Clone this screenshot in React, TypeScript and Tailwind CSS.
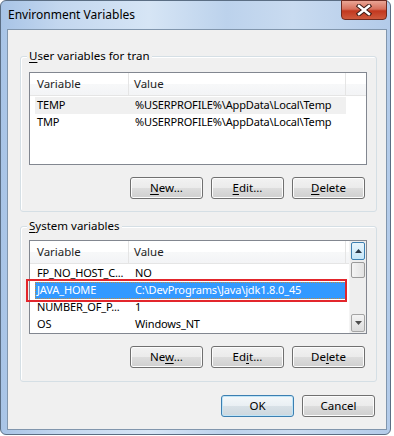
import React from 'react';

const userVars = [
  { name: 'TEMP', value: '%USERPROFILE%\\AppData\\Local\\Temp', state: 'inactive' },
  { name: 'TMP', value: '%USERPROFILE%\\AppData\\Local\\Temp', state: '' },
];

const systemVars = [
  { name: 'FP_NO_HOST_C...', value: 'NO', state: '' },
  { name: 'JAVA_HOME', value: 'C:\\DevPrograms\\Java\\jdk1.8.0_45', state: 'active' },
  { name: 'NUMBER_OF_P...', value: '1', state: '' },
  { name: 'OS', value: 'Windows_NT', state: '' },
];

type Row = { name: string; value: string; state: string };

const WinButton = ({ label, u, primary }: { label: string; u?: number; primary?: boolean }) => (
  <button
    className={
      'w-[73px] h-[22px] rounded-[3px] border text-[11.5px] leading-none text-black ' +
      (primary
        ? 'border-[#3c7fb1] shadow-[inset_0_0_0_1px_#bfe4f7] bg-[linear-gradient(#f4f8fa_0%,#e9eff3_50%,#d8e1e7_50%,#cdd7de_100%)]'
        : 'border-[#707070] shadow-[inset_0_0_0_1px_#fcfcfc] bg-[linear-gradient(#f2f2f2_0%,#ebebeb_50%,#dddddd_50%,#cfcfcf_100%)]')
    }
  >
    {u === undefined ? (
      label
    ) : (
      <>
        {label.slice(0, u)}
        <span className="underline underline-offset-2">{label[u]}</span>
        {label.slice(u + 1)}
      </>
    )}
  </button>
);

const ListHeader = () => (
  <div className="flex h-[23px] border-b border-[#e5e5e5] bg-[linear-gradient(#ffffff_0%,#ffffff_50%,#f7f8f9_51%,#f3f4f6_100%)] text-[11.5px] text-[#1e1e1e]">
    <div className="w-[99px] shrink-0 pl-[7px] flex items-center border-r border-[#e5e5e5]">Variable</div>
    <div className="w-[217px] shrink-0 pl-[5px] flex items-center border-r border-[#e5e5e5]">Value</div>
    <div className="flex-1" />
  </div>
);

const ListRows = ({ rows }: { rows: Row[] }) => (
  <div className="pt-[1px]">
    {rows.map((r) => (
      <div key={r.name} className="relative">
        <div
          className={
            'ml-[5px] w-[311px] h-[17px] flex items-center text-[11px] tracking-[-0.15px] ' +
            (r.state === 'active'
              ? 'bg-[#3399ff] text-white outline-1 outline-dotted outline-[#c88a3a] -outline-offset-1'
              : r.state === 'inactive'
              ? 'bg-[#f0f0f0] text-black'
              : 'text-black')
          }
        >
          <div className="w-[98px] shrink-0 pl-[2px] whitespace-nowrap">{r.name}</div>
          <div className="pl-[2px] whitespace-nowrap">{r.value}</div>
        </div>
        {r.state === 'active' && (
          // red annotation box drawn over the selected row
          <div className="absolute -left-[4px] -top-[3px] w-[321px] h-[23px] border-2 border-[#e3262c]" />
        )}
      </div>
    ))}
  </div>
);

const Arrow = ({ up }: { up?: boolean }) => (
  <svg width="7" height="4" viewBox="0 0 7 4">
    {up ? <path d="M0 4 L3.5 0 L7 4 Z" fill="#2b3a4a" /> : <path d="M0 0 L7 0 L3.5 4 Z" fill="#4d4d4d" />}
  </svg>
);

const ScrollBar = () => (
  <div className="w-[17px] h-full flex flex-col bg-[#eeeeee] border-l border-[#f4f4f4]">
    <div className="h-[18px] mx-[1px] mt-[1px] rounded-[2px] border border-[#3c7fb1] bg-[linear-gradient(#e8f5fc,#c6e6f8)] flex items-center justify-center">
      <Arrow up />
    </div>
    <div className="h-[16px] mx-[1px] mt-[2px] rounded-[2px] border border-[#9a9a9a] bg-[linear-gradient(to_right,#f4f4f4,#e2e2e2)]" />
    <div className="flex-1" />
    <div className="h-[18px] mx-[1px] mb-[1px] rounded-[2px] border border-[#a4a4a4] bg-[linear-gradient(#f4f4f4,#dcdcdc)] flex items-center justify-center">
      <Arrow />
    </div>
  </div>
);

const GroupBox = ({ title, children }: { title: string; children: React.ReactNode }) => (
  <div className="relative border border-[#d5dfe5] rounded-[3px] shadow-[inset_1px_1px_0_#ffffff]">
    <span className="absolute -top-[9px] left-[6px] bg-[#f0f0f0] px-[2px] text-[11.5px] leading-[16px] text-black">
      <span className="underline underline-offset-2">{title[0]}</span>
      {title.slice(1)}
    </span>
    {children}
  </div>
);

export default function App() {
  return (
    <div className="w-[394px] h-[436px] bg-white font-['Segoe_UI','Noto_Sans',sans-serif]">
      <div className="w-[391px] h-[435px] rounded-[6px] border border-[#5b6e84] bg-[linear-gradient(to_right,#a8c4e6_0%,#c3d7ef_15%,#d6e5f5_38%,#bcd2ec_58%,#c9dbf0_75%,#b3cbe9_100%)] flex flex-col">
        {/* title bar */}
        <div className="h-[28px] flex items-start">
          <div className="pl-[7px] pt-[6px] text-[12px] text-black leading-[16px]">Environment Variables</div>
          <div className="flex-1" />
          <div className="mr-[3px] -mt-px w-[46px] h-[20px] rounded-b-[4px] border border-[#6e2a20] bg-[linear-gradient(#e9a595_0%,#d7705c_45%,#c2381f_55%,#cf5a3d_100%)] flex items-center justify-center">
            <svg width="16" height="12" viewBox="0 0 16 12">
              <path d="M3 2 L13 10 M13 2 L3 10" stroke="#3b1a14" strokeWidth="4.5" strokeLinecap="square" />
              <path d="M3 2 L13 10 M13 2 L3 10" stroke="#ffffff" strokeWidth="2.5" strokeLinecap="square" />
            </svg>
          </div>
        </div>

        {/* client area */}
        <div className="mx-[6px] w-[380px] h-[401px] border border-[#8196ad] bg-[#f0f0f0] pl-[12px] pr-[9px] pt-[26px] flex flex-col">
          <GroupBox title="User variables for tran">
            <div className="pl-[8px] pr-[9px] pt-[15px] pb-[12px]">
              <div className="h-[93px] border border-[#828790] bg-white">
                <ListHeader />
                <ListRows rows={userVars} />
              </div>
              <div className="mt-[12px] flex justify-end gap-[8px] pr-[2px]">
                <WinButton label="New..." u={0} />
                <WinButton label="Edit..." u={0} />
                <WinButton label="Delete" u={0} />
              </div>
            </div>
          </GroupBox>

          <div className="mt-[14px]">
            <GroupBox title="System variables">
              <div className="pl-[8px] pr-[9px] pt-[13px] pb-[13px]">
                <div className="h-[94px] border border-[#828790] bg-white flex">
                  <div className="flex-1">
                    <ListHeader />
                    <ListRows rows={systemVars} />
                  </div>
                  <ScrollBar />
                </div>
                <div className="mt-[12px] flex justify-end gap-[8px] pr-[2px]">
                  <WinButton label="New..." u={2} />
                  <WinButton label="Edit..." u={2} />
                  <WinButton label="Delete" u={2} />
                </div>
              </div>
            </GroupBox>
          </div>

          <div className="mt-[13px] flex justify-end gap-[8px] pr-[2px]">
            <WinButton label="OK" primary />
            <WinButton label="Cancel" />
          </div>
        </div>
      </div>
    </div>
  );
}
